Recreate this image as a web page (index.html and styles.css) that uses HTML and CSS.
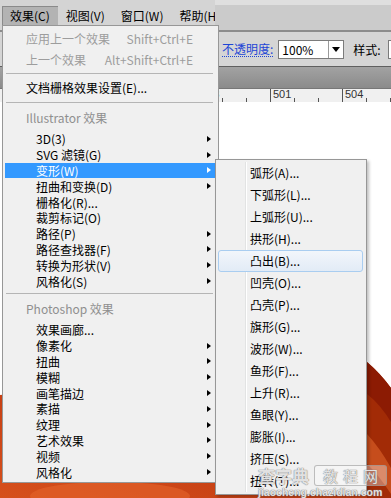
FILE: index.html
```html
<!DOCTYPE html>
<html lang="zh-CN">
<head>
  <meta charset="UTF-8">
  <title>效果菜单</title>
  <link rel="stylesheet" href="styles.css">
</head>
<body>
  <div class="app">
    <div class="topbar">
      <div class="menubar">
        <span class="menubar-item active">效果(C)</span>
        <span class="menubar-item">视图(V)</span>
        <span class="menubar-item">窗口(W)</span>
        <span class="menubar-item">帮助(H)</span>
      </div>
      <div class="docbar"></div>
    </div>

    <div class="controlbar">
      <a class="opacity-link">不透明度:</a>
      <div class="select">
        <span class="select-value">100%</span>
        <span class="select-btn"><span class="down"></span></span>
      </div>
      <span class="label">样式:</span>
      <div class="select select-cut"></div>
    </div>

    <div class="tabbar"></div>

    <div class="ruler">
      <span class="ruler-cell">498</span>
      <span class="ruler-cell">501</span>
      <span class="ruler-cell">504</span>
    </div>

    <div class="canvas">
      <svg viewBox="0 0 391 396" preserveAspectRatio="none">
        <defs>
          <linearGradient id="art" x1="1" y1="0" x2="0" y2="1">
            <stop offset="0" stop-color="#9a2404"/>
            <stop offset="0.5" stop-color="#c23c12"/>
            <stop offset="1" stop-color="#d6501c"/>
          </linearGradient>
        </defs>
        <path d="M0,293 L160,278 L367,260 Q380,271 391,286 L391,396 L0,396 Z" fill="url(#art)"/>
        <path d="M367,260 Q380,271 391,286 L391,396 L367,396 Z" fill="#8c1b03"/>
        <path d="M367,292 Q380,302 391,320 L391,396 L367,396 Z" fill="#a22b06"/>
        <path d="M367,332 Q380,346 391,366 L391,392 Q378,372 367,362 Z" fill="#c64d1c"/>
        <ellipse cx="110" cy="394" rx="80" ry="14" fill="#e4642c" opacity="0.6"/>
      </svg>
    </div>

    <div class="menu main-menu">
      <div class="menu-row tall disabled">应用上一个效果<span class="shortcut">Shift+Ctrl+E</span></div>
      <div class="menu-row tall disabled">上一个效果<span class="shortcut">Alt+Shift+Ctrl+E</span></div>
      <div class="sep first"></div>
      <div class="menu-row tall">文档栅格效果设置(E)...</div>
      <div class="sep"></div>
      <div class="menu-row head">Illustrator 效果</div>
      <div class="menu-row sub">3D(3)<span class="arrow"></span></div>
      <div class="menu-row sub">SVG 滤镜(G)<span class="arrow"></span></div>
      <div class="menu-row sub selected">变形(W)<span class="arrow"></span></div>
      <div class="menu-row sub">扭曲和变换(D)<span class="arrow"></span></div>
      <div class="menu-row sub">栅格化(R)...</div>
      <div class="menu-row sub">裁剪标记(O)</div>
      <div class="menu-row sub">路径(P)<span class="arrow"></span></div>
      <div class="menu-row sub">路径查找器(F)<span class="arrow"></span></div>
      <div class="menu-row sub">转换为形状(V)<span class="arrow"></span></div>
      <div class="menu-row sub">风格化(S)<span class="arrow"></span></div>
      <div class="sep"></div>
      <div class="menu-row head">Photoshop 效果</div>
      <div class="menu-row sub">效果画廊...</div>
      <div class="menu-row sub">像素化<span class="arrow"></span></div>
      <div class="menu-row sub">扭曲<span class="arrow"></span></div>
      <div class="menu-row sub">模糊<span class="arrow"></span></div>
      <div class="menu-row sub">画笔描边<span class="arrow"></span></div>
      <div class="menu-row sub">素描<span class="arrow"></span></div>
      <div class="menu-row sub">纹理<span class="arrow"></span></div>
      <div class="menu-row sub">艺术效果<span class="arrow"></span></div>
      <div class="menu-row sub">视频<span class="arrow"></span></div>
      <div class="menu-row sub">风格化<span class="arrow"></span></div>
    </div>

    <div class="menu submenu">
      <div class="sub-item">弧形(A)...</div>
      <div class="sub-item">下弧形(L)...</div>
      <div class="sub-item">上弧形(U)...</div>
      <div class="sub-item">拱形(H)...</div>
      <div class="sub-item hover">凸出(B)...</div>
      <div class="sub-item">凹壳(O)...</div>
      <div class="sub-item">凸壳(P)...</div>
      <div class="sub-item">旗形(G)...</div>
      <div class="sub-item">波形(W)...</div>
      <div class="sub-item">鱼形(F)...</div>
      <div class="sub-item">上升(R)...</div>
      <div class="sub-item">鱼眼(Y)...</div>
      <div class="sub-item">膨胀(I)...</div>
      <div class="sub-item">挤压(S)...</div>
      <div class="sub-item">扭转(T)...</div>
    </div>

    <div class="watermark">
      <div class="wm-top">
        <span class="wm-cha">查字典</span>
        <span class="wm-box">教程网</span>
      </div>
      <div class="wm-url">jiaocheng.chazidian.com</div>
    </div>
  </div>
</body>
</html>
```

FILE: styles.css
```css
* {
  box-sizing: border-box;
}

body {
  margin: 0;
  font-family: "Noto Sans CJK SC", sans-serif;
  font-size: 12px;
  color: #000;
  background: #fff;
}

.app {
  position: relative;
  width: 391px;
  height: 498px;
  overflow: hidden;
  display: flex;
  flex-direction: column;
}

/* top menu bar */
.topbar {
  display: flex;
  height: 30px;
  flex-shrink: 0;
  background: #dfdfdf;
}

.menubar {
  width: 215px;
  display: flex;
  align-items: flex-start;
  padding: 6px 0 0 2px;
  background: #d4d4d4;
  overflow: hidden;
  white-space: nowrap;
}

.menubar-item {
  height: 19px;
  line-height: 19px;
  padding: 0 8px;
}

.menubar-item.active {
  background: #b3b3b3;
  box-shadow: inset 1px 1px 0 #8a8a8a;
}

.docbar {
  flex: 1;
  margin-top: 5px;
  background: #cbcbcb;
}

/* control bar */
.controlbar {
  height: 36px;
  flex-shrink: 0;
  display: flex;
  align-items: center;
  padding-left: 222px;
  border-top: 2px solid #8c8c8c;
  background: #d5d5d5;
  white-space: nowrap;
}

.opacity-link {
  color: #1d45d6;
  border-bottom: 1px dotted #1d45d6;
  line-height: 15px;
}

.select {
  display: flex;
  width: 66px;
  height: 19px;
  margin-left: 5px;
  border: 1px solid #7b7b7b;
  background: #fff;
  flex-shrink: 0;
}

.select-value {
  flex: 1;
  padding-left: 3px;
  line-height: 17px;
}

.select-btn {
  width: 15px;
  display: flex;
  align-items: center;
  justify-content: center;
  border-left: 1px solid #9a9a9a;
}

.down {
  width: 0;
  height: 0;
  border-top: 5px solid #000;
  border-left: 4px solid transparent;
  border-right: 4px solid transparent;
}

.label {
  margin-left: 9px;
}

.select-cut {
  margin-left: 7px;
}

.tabbar {
  height: 22px;
  flex-shrink: 0;
  border-top: 1px solid #5f5f5f;
  background: linear-gradient(#a2a2a2, #8b8b8b);
}

/* ruler */
.ruler {
  height: 14px;
  flex-shrink: 0;
  display: flex;
  padding-left: 198px;
  border-top: 1px solid #777;
  background: #f0f0f0;
}

.ruler-cell {
  width: 72px;
  flex-shrink: 0;
  padding-left: 2px;
  border-left: 1px solid #555;
  font-family: "Liberation Sans", sans-serif;
  font-size: 11px;
  line-height: 11px;
  color: #333;
  background:
    linear-gradient(#555, #555) 23px 100% / 1px 4px no-repeat,
    linear-gradient(#555, #555) 47px 100% / 1px 4px no-repeat;
}

.canvas {
  flex: 1;
  background: #fff;
}

.canvas svg {
  display: block;
  width: 100%;
  height: 100%;
}

/* dropdown menus */
.menu {
  position: absolute;
  padding: 2px;
  border: 1px solid #979797;
  background: #f0f0f0;
  white-space: nowrap;
}

.main-menu {
  left: 2px;
  top: 25px;
  width: 217px;
}

.menu-row {
  display: flex;
  align-items: center;
}

.menu-row.tall {
  height: 21px;
  padding-left: 21px;
}

.menu-row.head {
  height: 25px;
  line-height: 23px;
  align-items: flex-start;
  padding-left: 21px;
  color: #8f8f8f;
}

.menu-row.sub {
  height: 15.8px;
  padding-left: 31px;
  padding-right: 5px;
}

.menu-row.disabled {
  color: #9d9d9d;
}

.shortcut {
  margin-left: auto;
  padding-right: 23px;
}

.sep {
  height: 8px;
  padding: 4px 3px 0 1px;
}

.sep.first {
  height: 7px;
  padding-top: 3px;
}

.sep::before {
  content: "";
  display: block;
  border-top: 1px solid #b5b5b5;
}

.arrow {
  margin-left: auto;
  width: 0;
  height: 0;
  border-left: 4px solid #000;
  border-top: 3.5px solid transparent;
  border-bottom: 3.5px solid transparent;
}

.menu-row.selected {
  background: #3399ff;
  color: #fff;
}

.selected .arrow {
  border-left-color: #fff;
}

.submenu {
  left: 215px;
  top: 159px;
  width: 152px;
  box-shadow: 2px 2px 3px rgba(0, 0, 0, 0.25);
}

.submenu::before {
  content: "";
  position: absolute;
  left: 29px;
  top: 2px;
  bottom: 2px;
  width: 1px;
  background: #e2e3e3;
  box-shadow: 1px 0 0 #fff;
}

.sub-item {
  position: relative;
  height: 22px;
  line-height: 20px;
  margin-right: 1px;
  padding-left: 31px;
  border: 1px solid transparent;
  border-radius: 3px;
}

.sub-item.hover {
  border-color: #a9cdf0;
  background: linear-gradient(#f2f6fb, #e2ebf6);
}

/* watermark */
.watermark {
  position: absolute;
  left: 258px;
  top: 465px;
  color: rgba(255, 255, 255, 0.8);
  text-shadow: 0 0 1px #7a7a7a, 0 0 1px #7a7a7a;
}

.wm-top {
  display: flex;
  align-items: center;
  gap: 5px;
}

.wm-cha {
  font-size: 17px;
  font-weight: bold;
  line-height: 21px;
}

.wm-box {
  padding: 0 3px 0 8px;
  font-size: 15px;
  line-height: 19px;
  letter-spacing: 5px;
  border: 1px solid rgba(150, 150, 150, 0.6);
  border-radius: 3px;
  background: rgba(255, 255, 255, 0.35);
}

.wm-url {
  font-family: "Liberation Sans", sans-serif;
  font-size: 10.5px;
  font-weight: bold;
  line-height: 12px;
}
```
